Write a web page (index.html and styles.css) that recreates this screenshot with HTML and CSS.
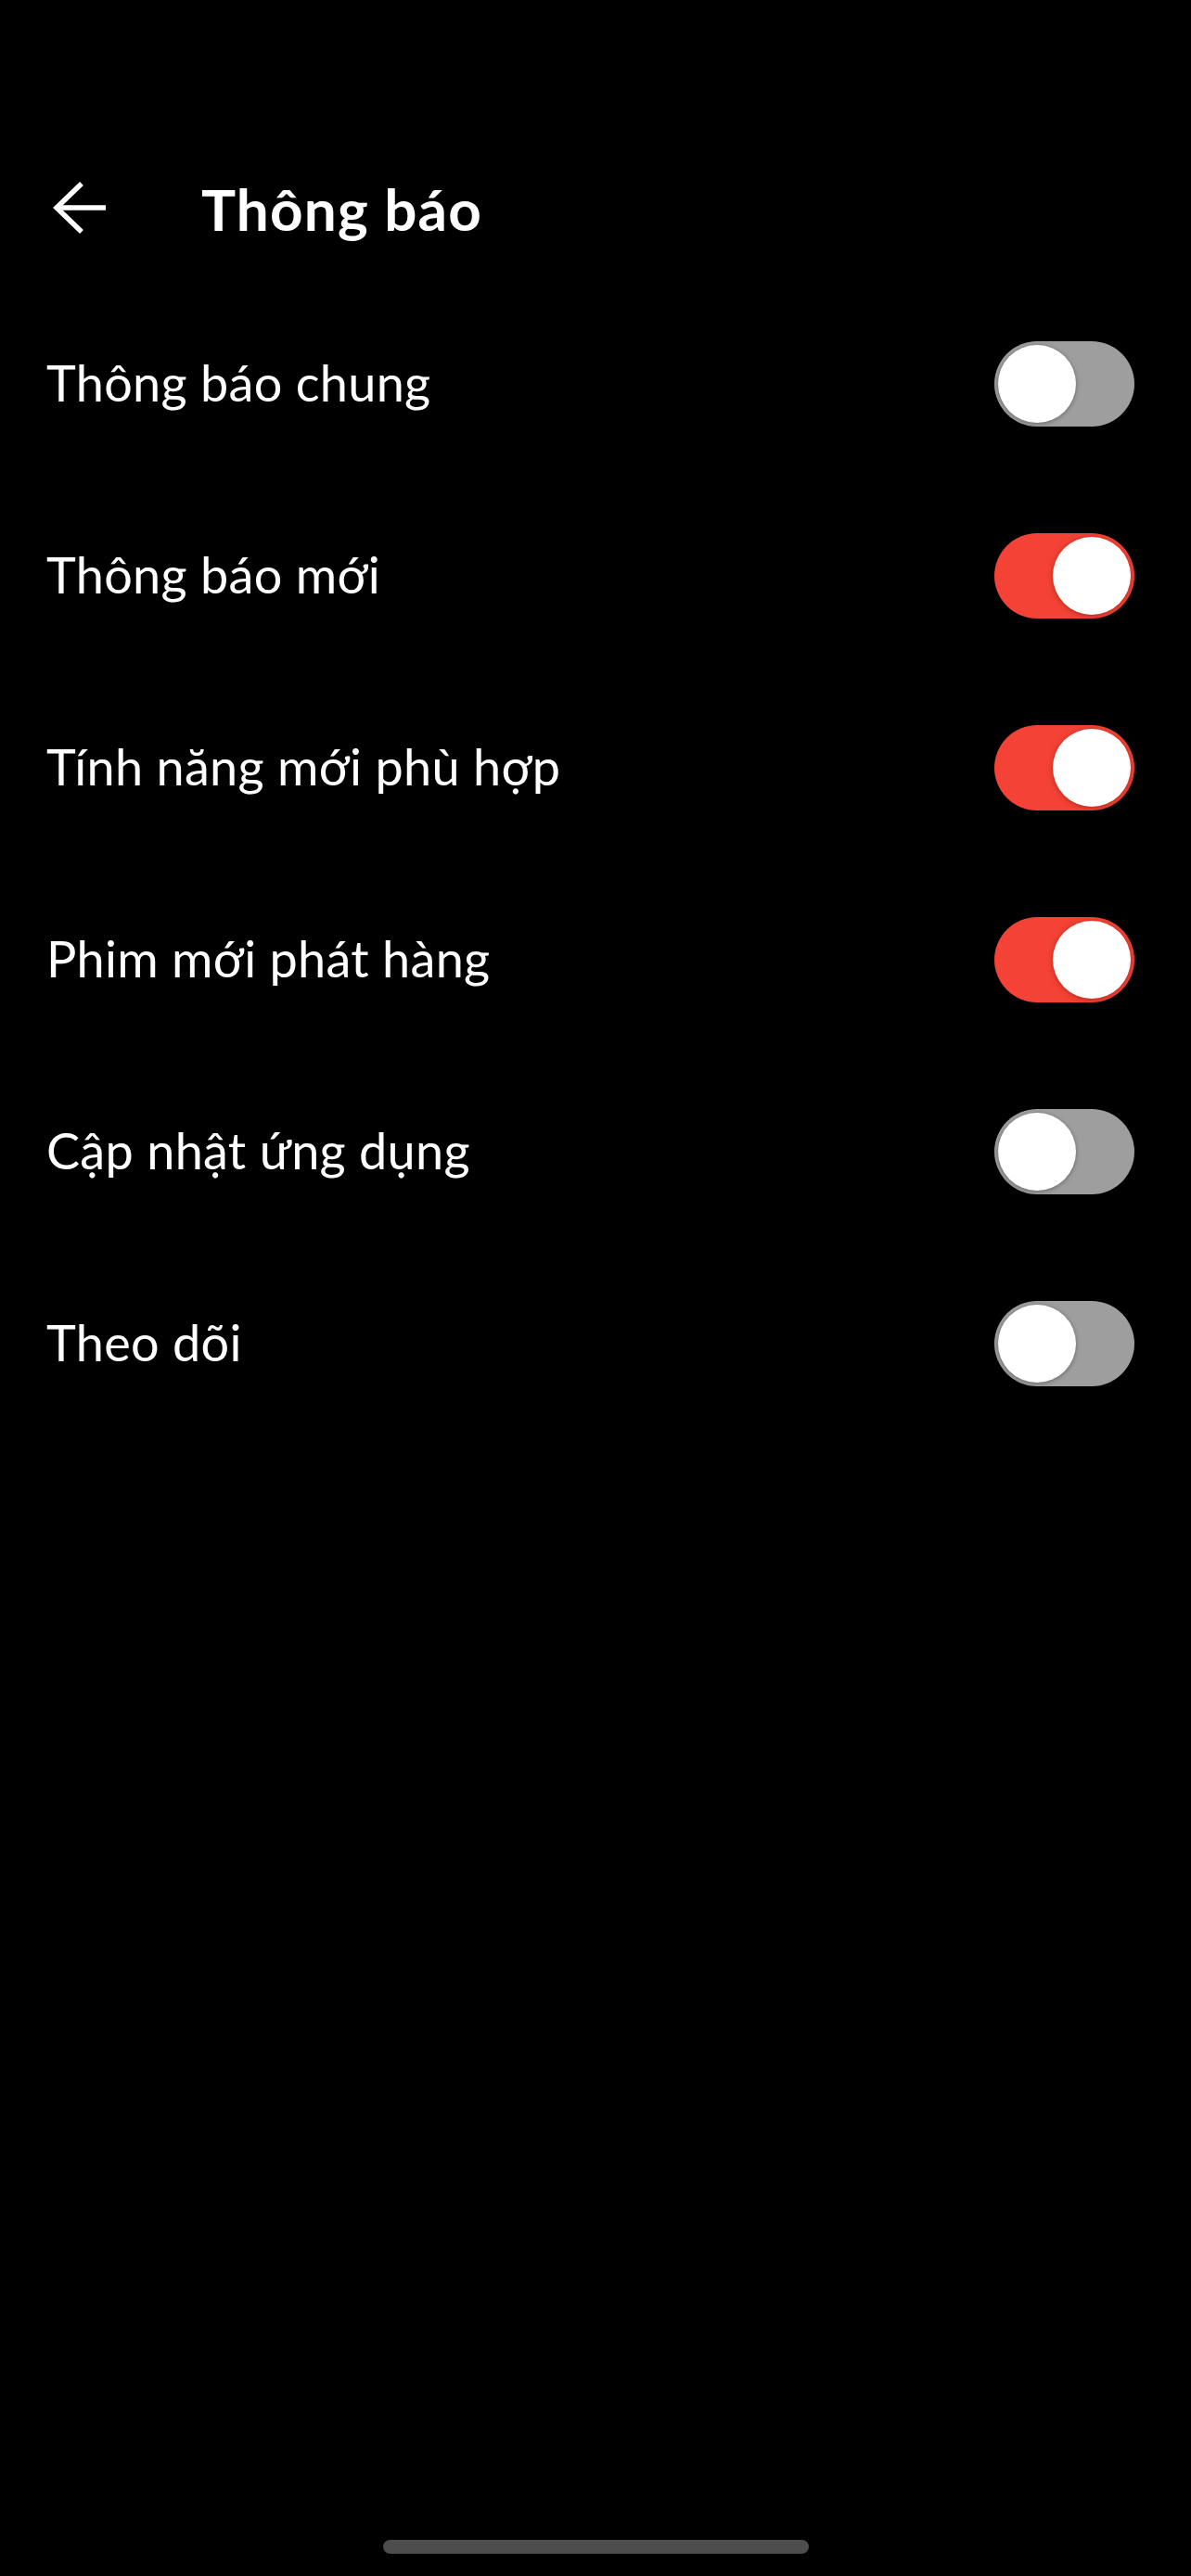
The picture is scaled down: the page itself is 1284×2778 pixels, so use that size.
FILE: index.html
```html
<!DOCTYPE html>
<html lang="vi">
<head>
<meta charset="utf-8">
<title>Thông báo</title>
<link rel="stylesheet" href="styles.css">
</head>
<body>
<div class="screen">
  <header class="header">
    <button class="back" aria-label="Quay lại">
      <svg width="62" height="62" viewBox="0 0 62 62" fill="none" stroke="#fff" stroke-width="5.5" stroke-linejoin="miter">
        <path d="M7 30 H60"/>
        <path d="M34 4 L7 30 L34 56"/>
      </svg>
    </button>
    <h1 class="title">Thông báo</h1>
  </header>
  <ul class="list">
    <li class="row"><span class="label">Thông báo chung</span><span class="switch"><span class="thumb"></span></span></li>
    <li class="row"><span class="label">Thông báo mới</span><span class="switch on"><span class="thumb"></span></span></li>
    <li class="row"><span class="label">Tính năng mới phù hợp</span><span class="switch on"><span class="thumb"></span></span></li>
    <li class="row"><span class="label">Phim mới phát hàng</span><span class="switch on"><span class="thumb"></span></span></li>
    <li class="row"><span class="label">Cập nhật ứng dụng</span><span class="switch"><span class="thumb"></span></span></li>
    <li class="row"><span class="label">Theo dõi</span><span class="switch"><span class="thumb"></span></span></li>
  </ul>
  <div class="spacer"></div>
  <div class="home-indicator"></div>
</div>
</body>
</html>
```

FILE: styles.css
```css
html, body {
  margin: 0;
  padding: 0;
  background: #000;
}

.screen {
  width: 1284px;
  min-height: 2778px;
  display: flex;
  flex-direction: column;
  font-family: Lato, "Noto Sans", sans-serif;
  color: #fff;
}

.header {
  margin-top: 165px;
  height: 120px;
  display: flex;
  align-items: center;
  padding-left: 54px;
}

.back {
  width: 62px;
  height: 62px;
  padding: 0;
  margin: 0;
  border: 0;
  background: none;
  display: flex;
  align-items: center;
  justify-content: center;
}

.back svg {
  display: block;
}

.title {
  margin: 0 0 0 101px;
  font-size: 62px;
  font-weight: 700;
  line-height: 1;
  letter-spacing: 1.2px;
}

.list {
  list-style: none;
  margin: 25px 0 0 0;
  padding: 0;
}

.row {
  height: 207px;
  display: flex;
  align-items: center;
  justify-content: space-between;
  padding: 0 61px 0 50px;
}

.label {
  font-size: 54px;
  font-weight: 400;
  line-height: 1.2;
  letter-spacing: 0.3px;
}

.switch {
  width: 151px;
  height: 92px;
  border-radius: 46px;
  background: #9e9e9e;
  display: flex;
  align-items: center;
  padding: 0 4px;
  box-sizing: border-box;
  justify-content: flex-start;
  flex: none;
}

.switch.on {
  background: #f44336;
  justify-content: flex-end;
}

.thumb {
  width: 84px;
  height: 84px;
  border-radius: 50%;
  background: #fff;
  box-shadow: 0 1px 5px rgba(0, 0, 0, 0.35);
}

.switch.on .thumb {
  box-shadow: 0 1px 6px rgba(120, 20, 10, 0.55);
}

.spacer {
  flex: 1;
}

.home-indicator {
  width: 459px;
  height: 15px;
  border-radius: 8px;
  background: #4d4d4d;
  margin: 0 0 24px 413px;
}
```
